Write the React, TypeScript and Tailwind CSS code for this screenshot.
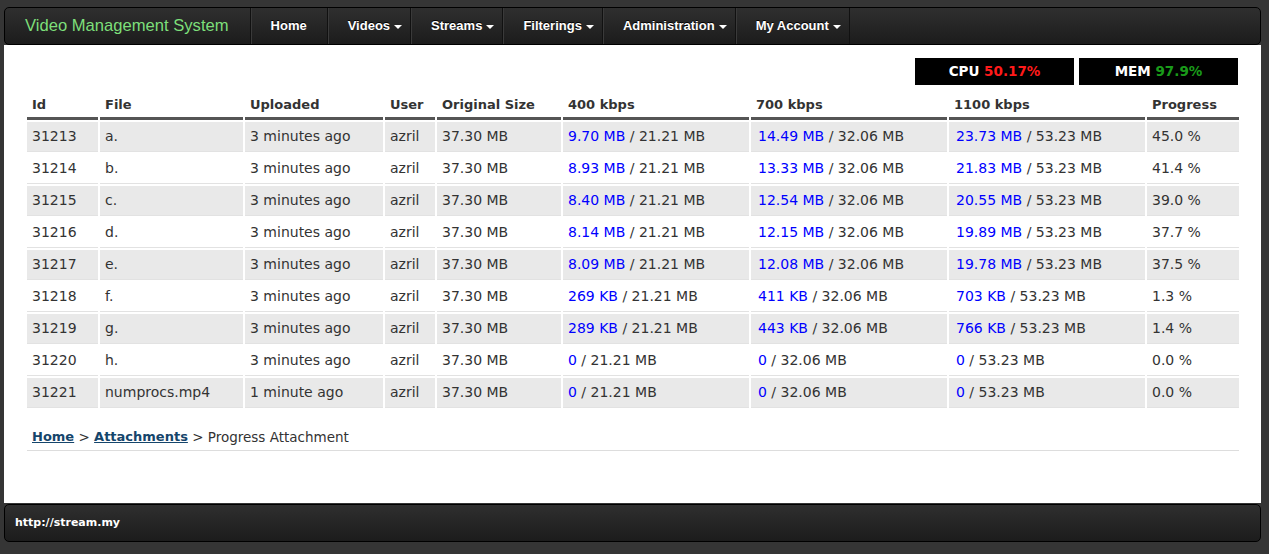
import React from 'react';

type Row = {
  id: number;
  file: string;
  uploaded: string;
  size: string;
  r400: string;
  r700: string;
  r1100: string;
  progress: string;
};

const rows: Row[] = [
  { id: 31213, file: 'a.', uploaded: '3 minutes ago', size: '37.30 MB', r400: '9.70 MB', r700: '14.49 MB', r1100: '23.73 MB', progress: '45.0 %' },
  { id: 31214, file: 'b.', uploaded: '3 minutes ago', size: '37.30 MB', r400: '8.93 MB', r700: '13.33 MB', r1100: '21.83 MB', progress: '41.4 %' },
  { id: 31215, file: 'c.', uploaded: '3 minutes ago', size: '37.30 MB', r400: '8.40 MB', r700: '12.54 MB', r1100: '20.55 MB', progress: '39.0 %' },
  { id: 31216, file: 'd.', uploaded: '3 minutes ago', size: '37.30 MB', r400: '8.14 MB', r700: '12.15 MB', r1100: '19.89 MB', progress: '37.7 %' },
  { id: 31217, file: 'e.', uploaded: '3 minutes ago', size: '37.30 MB', r400: '8.09 MB', r700: '12.08 MB', r1100: '19.78 MB', progress: '37.5 %' },
  { id: 31218, file: 'f.', uploaded: '3 minutes ago', size: '37.30 MB', r400: '269 KB', r700: '411 KB', r1100: '703 KB', progress: '1.3 %' },
  { id: 31219, file: 'g.', uploaded: '3 minutes ago', size: '37.30 MB', r400: '289 KB', r700: '443 KB', r1100: '766 KB', progress: '1.4 %' },
  { id: 31220, file: 'h.', uploaded: '3 minutes ago', size: '37.30 MB', r400: '0', r700: '0', r1100: '0', progress: '0.0 %' },
  { id: 31221, file: 'numprocs.mp4', uploaded: '1 minute ago', size: '37.30 MB', r400: '0', r700: '0', r1100: '0', progress: '0.0 %' },
];

const menus = [
  { label: 'Home', caret: false },
  { label: 'Videos', caret: true },
  { label: 'Streams', caret: true },
  { label: 'Filterings', caret: true },
  { label: 'Administration', caret: true },
  { label: 'My Account', caret: true },
];

const Rate = ({ done, total }: { done: string; total: string }) => (
  <>
    <span className="text-[#0000ff]">{done}</span> / {total}
  </>
);

const App: React.FC = () => {
  return (
    <div className="min-h-[554px] bg-[#353535] pt-[7px] pl-[4px] pr-[8px] font-['DejaVu_Sans',sans-serif] text-[#333]">
      {/* Navbar */}
      <div className="flex h-[38px] rounded-[5px] border border-black bg-gradient-to-b from-[#2f2f2f] to-[#1c1c1c]">
        <div className="flex items-center border-r border-[#111] pl-[20px] pr-[21px] font-['Liberation_Sans',Arial,sans-serif] text-[16.6px] text-[#7ddf7a]">
          Video Management System
        </div>
        {menus.map((m) => (
          <div
            key={m.label}
            className={`flex items-center gap-[4px] border-r border-[#111] shadow-[inset_1px_0_0_#3a3a3a] pl-[20px] font-['Liberation_Sans',Arial,sans-serif] text-[13px] font-bold text-white [text-shadow:0_-1px_0_#000] ${m.caret ? 'pr-[8px]' : 'pr-[20px]'}`}
          >
            {m.label}
            {m.caret && (
              <span className="mt-[2px] h-0 w-0 border-x-[4px] border-t-[4px] border-x-transparent border-t-white" />
            )}
          </div>
        ))}
      </div>

      {/* Content */}
      <div className="bg-white pl-[21px] pr-[20px] pt-[13px] pb-[52px]">
        <div className="flex justify-end gap-[5px] pr-[3px]">
          <div className="flex h-[27px] w-[159px] items-center justify-center bg-black text-[13.5px] font-bold text-white">
            CPU&nbsp;<span className="text-[#ff1a1a]">50.17%</span>
          </div>
          <div className="flex h-[27px] w-[159px] items-center justify-center bg-black text-[13.5px] font-bold text-white">
            MEM&nbsp;<span className="text-[#1a9a1a]">97.9%</span>
          </div>
        </div>

        <table className="mt-[5px] w-[1216px] table-fixed border-separate border-spacing-0.5 text-[14px]">
          <colgroup>
            <col className="w-[71px]" />
            <col className="w-[143px]" />
            <col className="w-[138px]" />
            <col className="w-[50px]" />
            <col className="w-[124px]" />
            <col className="w-[186px]" />
            <col className="w-[196px]" />
            <col className="w-[196px]" />
            <col className="w-[92px]" />
          </colgroup>
          <thead>
            <tr>
              {['Id', 'File', 'Uploaded', 'User', 'Original Size', '400 kbps', '700 kbps', '1100 kbps', 'Progress'].map((h) => (
                <th
                  key={h}
                  className="h-[28px] border-b-[3px] border-[#555] px-[5px] text-left align-middle text-[13px] font-bold whitespace-nowrap"
                >
                  {h}
                </th>
              ))}
            </tr>
          </thead>
          <tbody>
            {rows.map((r, i) => {
              const cell = `h-[30px] px-[5px] align-middle whitespace-nowrap border-b border-[#e2e2e2] ${i % 2 === 0 ? 'bg-[#e9e9e9]' : 'bg-white'}`;
              return (
                <tr key={r.id}>
                  <td className={cell}>{r.id}</td>
                  <td className={cell}>{r.file}</td>
                  <td className={cell}>{r.uploaded}</td>
                  <td className={cell}>azril</td>
                  <td className={cell}>{r.size}</td>
                  <td className={cell}>
                    <Rate done={r.r400} total="21.21 MB" />
                  </td>
                  <td className={`${cell} pl-[7px]`}>
                    <Rate done={r.r700} total="32.06 MB" />
                  </td>
                  <td className={`${cell} pl-[7px]`}>
                    <Rate done={r.r1100} total="53.23 MB" />
                  </td>
                  <td className={cell}>{r.progress}</td>
                </tr>
              );
            })}
          </tbody>
        </table>

        {/* Breadcrumb */}
        <div className="mx-[2px] mt-[14px] flex h-[27px] w-[1212px] items-center border-b border-[#ddd] pl-[5px] text-[13.5px]">
          <a href="#" className="text-[13px] font-bold text-[#15456b] underline">Home</a>
          <span>&nbsp;&gt;&nbsp;</span>
          <a href="#" className="text-[13px] font-bold text-[#15456b] underline">Attachments</a>
          <span>&nbsp;&gt; Progress Attachment</span>
        </div>
      </div>

      {/* Footer */}
      <div className="mt-[1px] flex h-[38px] items-center rounded-[5px] border border-black bg-gradient-to-b from-[#2f2f2f] to-[#1c1c1c] pl-[10px] text-[11px] font-bold text-white">
        http://stream.my
      </div>
    </div>
  );
};

export default App;
